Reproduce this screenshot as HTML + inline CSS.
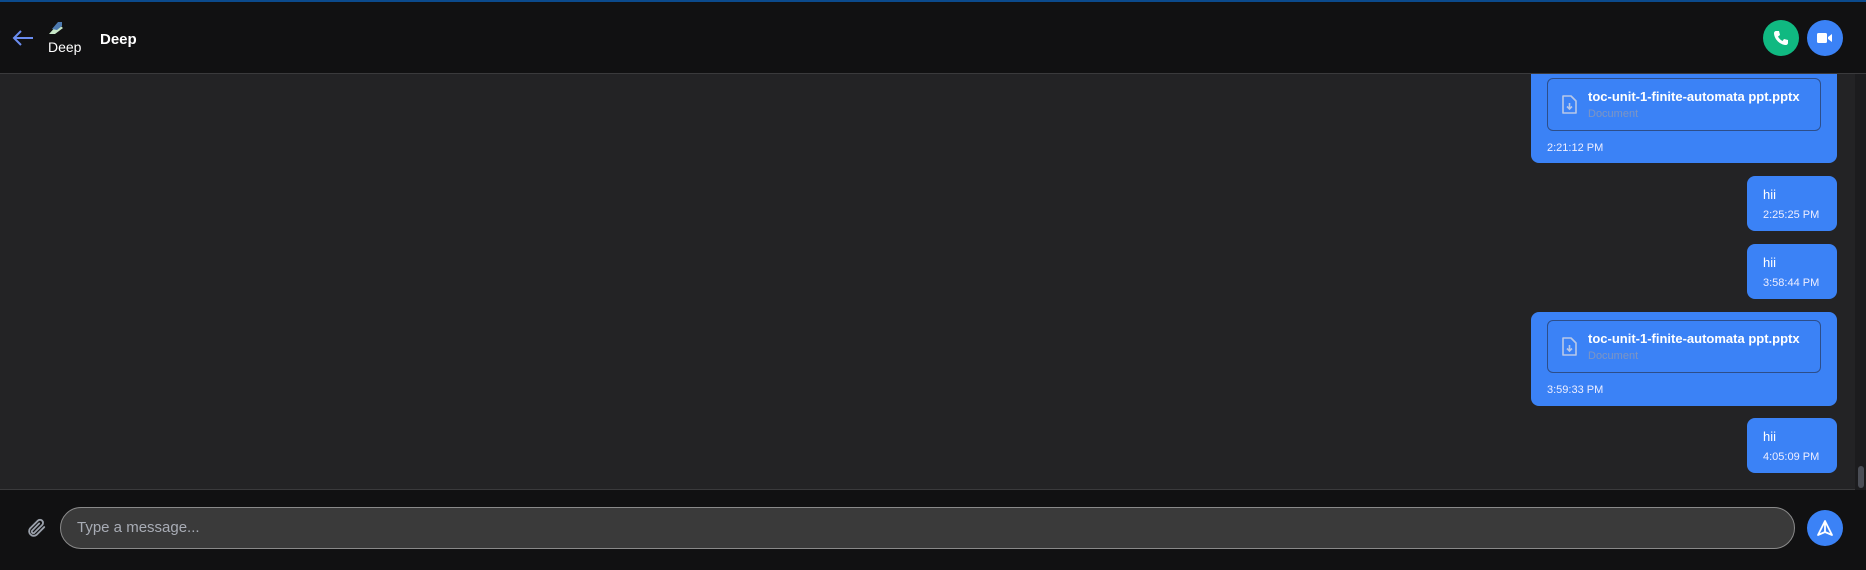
<!DOCTYPE html>
<html><head><style>
*{margin:0;padding:0;box-sizing:border-box}
body{width:1866px;height:570px;background:#111112;font-family:"Liberation Sans",sans-serif;position:relative;overflow:hidden;color:#fff}
.top{position:absolute;left:0;top:0;width:1866px;height:2px;background:#0b4a8c;z-index:3}
.hdr{position:absolute;left:0;top:2px;width:1866px;height:72px;background:#111112;border-bottom:1px solid #3a3a3c;z-index:2}
.msgs{position:absolute;left:0;top:74px;width:1866px;height:416px;background:#232325;border-bottom:1px solid #3a3a3c;overflow:hidden}
.sb{position:absolute;right:0;top:74px;width:11px;height:416px;background:#1c1c1e}
.thumb{position:absolute;right:2px;top:466px;width:6px;height:22px;background:#4a4d55;border-radius:3px}
.b{position:absolute;background:#3b82f6;border-radius:8px}
.t{position:absolute;font-size:11px;color:#eef}
.hii{position:absolute;font-size:13px}
.file{position:absolute;left:16px;border:1px solid #2d4e8a;border-radius:6px;width:274px;height:53px}
.fn{position:absolute;left:40px;top:10px;font-weight:bold;font-size:13px;white-space:nowrap}
.doc{position:absolute;left:40px;top:29px;font-size:11px;color:#7e95c2}
.circ{position:absolute;width:36px;height:36px;border-radius:50%}
.inp{position:absolute;left:60px;top:507px;width:1735px;height:42px;border:1px solid #8a8a8a;border-radius:21px;background:#3a3a3a;color:#a8acb5;font-size:15px;padding:11px 0 0 16px}
</style></head><body>
<div class="top"></div>
<div class="hdr">
<svg style="position:absolute;left:11px;top:27px" width="24" height="18" viewBox="0 0 24 18"><path d="M22 9H3M10 2L3 9l7 7" stroke="#6b8df0" stroke-width="2" fill="none"/></svg>
<svg style="position:absolute;left:48px;top:17px" width="16" height="16" viewBox="0 0 16 16"><path d="M1 15L10 5 15 9 7 15z" fill="#c8e8c8"/><path d="M4 10L10 3h4v4L9 11z" fill="#4d7ab0"/></svg>
<div style="position:absolute;left:48px;top:37px;font-size:14px;color:#fff">Deep</div>
<div style="position:absolute;left:100px;top:29px;font-size:15px;font-weight:bold">Deep</div>
<div class="circ" style="left:1763px;top:18px;background:#10b981"><svg style="position:absolute;left:10px;top:10px" width="16" height="16" viewBox="0 0 16 16"><path d="M3 1h3l1 4-2 1.5c1 2 2.5 3.5 4.5 4.5L11 9l4 1v3c0 1-1 2-2 2C7 15 1 9 1 3c0-1 1-2 2-2z" fill="#fff"/></svg></div>
<div class="circ" style="left:1807px;top:18px;background:#3b82f6"><svg style="position:absolute;left:10px;top:12px" width="16" height="12" viewBox="0 0 16 12"><rect x="0" y="1" width="10" height="10" rx="1.5" fill="#fff"/><path d="M11 5l4-3v8l-4-3z" fill="#fff"/></svg></div>
</div>
<div class="msgs">
<div class="b" style="left:1531px;top:-20px;width:306px;height:109px;border-radius:0 0 8px 8px">
 <div class="file" style="top:24px"><svg style="position:absolute;left:12px;top:16px" width="18" height="20" viewBox="0 0 18 20"><path d="M3 1h8l5 5v12H3z" fill="none" stroke="#b8c8e8" stroke-width="1.6" stroke-linejoin="round"/><path d="M9.5 8v6M7 11.5l2.5 2.5 2.5-2.5" stroke="#b8c8e8" stroke-width="1.6" fill="none"/></svg><div class="fn">toc-unit-1-finite-automata ppt.pptx</div><div class="doc">Document</div></div>
 <div class="t" style="left:16px;top:88px">2:21:12 PM</div>
</div>
<div class="b" style="left:1747px;top:102px;width:90px;height:55px"><div class="hii" style="left:16px;top:11px">hii</div><div class="t" style="left:16px;top:33px">2:25:25 PM</div></div>
<div class="b" style="left:1747px;top:170px;width:90px;height:55px"><div class="hii" style="left:16px;top:11px">hii</div><div class="t" style="left:16px;top:33px">3:58:44 PM</div></div>
<div class="b" style="left:1531px;top:238px;width:306px;height:94px">
 <div class="file" style="top:8px"><svg style="position:absolute;left:12px;top:16px" width="18" height="20" viewBox="0 0 18 20"><path d="M3 1h8l5 5v12H3z" fill="none" stroke="#b8c8e8" stroke-width="1.6" stroke-linejoin="round"/><path d="M9.5 8v6M7 11.5l2.5 2.5 2.5-2.5" stroke="#b8c8e8" stroke-width="1.6" fill="none"/></svg><div class="fn">toc-unit-1-finite-automata ppt.pptx</div><div class="doc">Document</div></div>
 <div class="t" style="left:16px;top:72px">3:59:33 PM</div>
</div>
<div class="b" style="left:1747px;top:344px;width:90px;height:55px"><div class="hii" style="left:16px;top:11px">hii</div><div class="t" style="left:16px;top:33px">4:05:09 PM</div></div>
</div>
<div class="sb"></div><div class="thumb"></div>
<svg style="position:absolute;left:25px;top:517px" width="22" height="22" viewBox="0 0 24 24"><path d="M21 11l-8.5 8.5a5 5 0 01-7-7L14 4a3.3 3.3 0 014.7 4.7l-8.5 8.5a1.7 1.7 0 01-2.4-2.4L15.5 7" fill="none" stroke="#9aa0aa" stroke-width="2" stroke-linecap="round"/></svg>
<div class="inp">Type a message...</div>
<div class="circ" style="left:1807px;top:510px;background:#3b82f6"><svg style="position:absolute;left:9px;top:9px" width="18" height="18" viewBox="0 0 18 18"><path d="M9 2L2 16l7-3 7 3z M9 2v11" fill="none" stroke="#fff" stroke-width="1.8" stroke-linejoin="round"/></svg></div>
</body></html>
